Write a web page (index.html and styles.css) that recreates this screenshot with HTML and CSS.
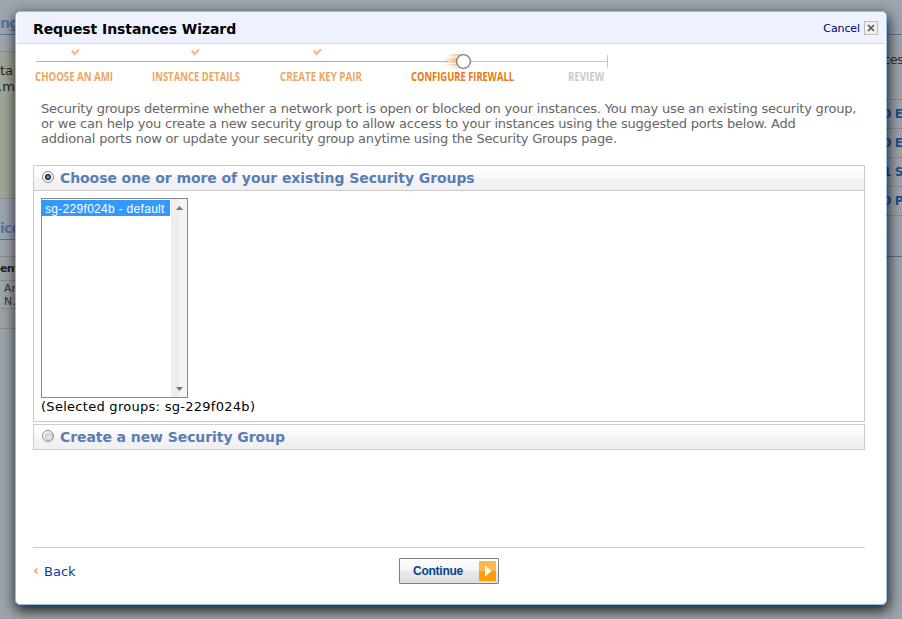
FILE: index.html
```html
<!DOCTYPE html>
<html lang="en">
<head>
<meta charset="utf-8">
<title>Request Instances Wizard</title>
<link rel="stylesheet" href="styles.css">
</head>
<body>
<div class="page">
  <div class="page-left">
    <div class="bg-head">ng</div>
    <div class="bg-gap"></div>
    <div class="bg-note">ta<br><span class="bg-ma">.ma</span></div>
    <div class="bg-head bg-head-low">ice</div>
    <div class="bg-gap"></div>
    <div class="bg-th">ent</div>
    <div class="bg-row">Am<br>N.</div>
    <div class="bg-foot"></div>
  </div>
  <div class="page-right">
    <div class="bg-head"></div>
    <div class="bg-intro">ces</div>
    <div class="bg-link">0 E</div>
    <div class="bg-link">0 E</div>
    <div class="bg-link">1 S</div>
    <div class="bg-link">0 P</div>
    <div class="bg-head bg-head-right"></div>
  </div>
</div>
<div class="modal">
  <div class="titlebar">
    <div class="title">Request Instances Wizard</div>
    <div class="cancel">Cancel</div>
    <svg class="close" width="14" height="14" viewBox="0 0 14 14"><rect x=".5" y=".5" width="13" height="13" fill="#f1f1f1" stroke="#bbb"/><path d="M4 4l6 6M10 4l-6 6" stroke="#555" stroke-width="1.7"/></svg>
  </div>
  <svg class="steps" width="580" height="44" viewBox="0 0 580 44">
    <defs><linearGradient id="trail"><stop offset="0" stop-color="#f3a45c" stop-opacity="0"/><stop offset="1" stop-color="#f3a45c" stop-opacity=".75"/></linearGradient></defs>
    <rect x="3" y="17" width="412" height="1" fill="#e9a36a"/>
    <path d="M437 17.500H574M574.500 11V24" stroke="#c8c8c8"/>
    <g fill="url(#trail)"><rect x="413" y="10" width="15" height="2"/><rect x="415" y="12" width="12" height="2" opacity=".6"/><rect x="410" y="14" width="15" height="2"/><rect x="408" y="16" width="16" height="3"/><rect x="411" y="20" width="15" height="2"/><rect x="414" y="23" width="14" height="1"/></g>
    <circle cx="430.500" cy="17.500" r="6.900" fill="#fff" stroke="#808080" stroke-width="1.400"/>
    <g fill="none" stroke="#f4b98a" stroke-width="2.200"><path d="M38.800 6.500l2.700 3.500 4.500-4.500"/><path d="M158.800 6.500l2.700 3.500 4.500-4.500"/><path d="M280.800 6.500l2.700 3.500 4.500-4.500"/></g>
    <g class="labels">
      <text x="2" y="37" textLength="78" lengthAdjust="spacingAndGlyphs">CHOOSE AN AMI</text>
      <text x="119" y="37" textLength="88" lengthAdjust="spacingAndGlyphs">INSTANCE DETAILS</text>
      <text x="247" y="37" textLength="82" lengthAdjust="spacingAndGlyphs">CREATE KEY PAIR</text>
      <text class="now" x="378" y="37" textLength="103" lengthAdjust="spacingAndGlyphs">CONFIGURE FIREWALL</text>
      <text class="next" x="535" y="37" textLength="36" lengthAdjust="spacingAndGlyphs">REVIEW</text>
    </g>
  </svg>
  <div class="intro">Security groups determine whether a network port is open or blocked on your instances. You may use an existing security group,<br>or we can help you create a new security group to allow access to your instances using the suggested ports below. Add<br>addional ports now or update your security group anytime using the Security Groups page.</div>
  <div class="panel">
    <div class="panel-head"><span class="radio radio-on"></span><span>Choose one or more of your existing Security Groups</span></div>
    <div class="panel-body">
      <div class="list">
        <div class="options"><div class="option"><span>sg-229f024b - default</span></div></div>
        <div class="scroll">
          <svg width="7" height="4" viewBox="0 0 7 4"><path d="M0 4L3.500 0 7 4z" fill="#777"/></svg>
          <svg width="7" height="4" viewBox="0 0 7 4"><path d="M0 0L3.500 4 7 0z" fill="#777"/></svg>
        </div>
      </div>
      <div class="selected">(Selected groups: sg-229f024b)</div>
    </div>
  </div>
  <div class="panel panel-two">
    <div class="panel-head"><span class="radio"></span><span>Create a new Security Group</span></div>
  </div>
  <div class="footer">
    <div class="back"><svg width="4" height="6" viewBox="0 0 4 6"><path d="M3.500 .5L1 3l2.500 2.500" fill="none" stroke="#f39a1e" stroke-width="1.300"/></svg><span>Back</span></div>
    <div class="continue"><span>Continue</span><svg width="17" height="20" viewBox="0 0 17 20"><rect width="17" height="10" fill="#ffb84a"/><rect y="10" width="17" height="10" fill="#ff9c06"/><path d="M6 4.500L12.500 10 6 15.500z" fill="#fff"/></svg></div>
  </div>
</div>
</body>
</html>
```
FILE: styles.css
```css
* { box-sizing: border-box; }
body {
  margin: 0;
  width: 902px;
  height: 619px;
  overflow: hidden;
  background: #9ba5ab;
  font-family: "DejaVu Sans", Verdana, sans-serif;
  font-size: 13px;
}
.page {
  height: 619px;
  padding-top: 10px;
  display: flex;
  justify-content: space-between;
}
.page-left, .page-right { width: 17px; overflow: hidden; white-space: nowrap; }
.bg-head {
  height: 25px;
  border-bottom: 1px solid #55789f;
  background: #9da4b2;
  color: #54779f;
  font-weight: bold;
  font-size: 14px;
  line-height: 26px;
  letter-spacing: -.8px;
}
.bg-gap { height: 16px; background: #a0a6ad; }
.bg-note {
  height: 148px;
  border: solid #8b908d;
  border-width: 1px 0;
  background: #a0a698;
  color: #222;
  line-height: 16px;
  padding-top: 11px;
}
.bg-ma { margin-left: -2px; }
.bg-head-low { height: 41px; line-height: 58px; }
.bg-th {
  height: 25px;
  border: solid #888d92;
  border-width: 1px 0;
  font-size: 11px;
  font-weight: bold;
  line-height: 24px;
  letter-spacing: -.6px;
  color: #222;
}
.bg-row {
  height: 28px;
  border-bottom: 1px solid #888d92;
  font-size: 11px;
  line-height: 13px;
  padding: 1px 0 0 4px;
  color: #333;
}
.bg-foot { height: 20px; border-bottom: 1px solid #888d92; background: #9da1a5; }
.page-right { width: 19px; background: linear-gradient(#a0a4ab, #a0a4ab) 0 0 / 100% 247px no-repeat; }
.bg-intro { height: 65px; padding-top: 17px; color: #333; border-bottom: 1px dotted #74787f; letter-spacing: -.4px; }
.bg-link {
  height: 29px;
  line-height: 28px;
  border-bottom: 1px dotted #74787f;
  color: #1f4f85;
  font-weight: bold;
  font-size: 12px;
  letter-spacing: -.4px;
}
.bg-head-right { margin-top: 16px; }
.modal {
  position: absolute;
  left: 15px;
  top: 11px;
  width: 872px;
  height: 594px;
  border: 1px solid #8fbfe6;
  border-radius: 5px;
  background: #fff;
  box-shadow: 1px 5px 13px 1px rgba(0, 0, 0, .8);
  padding: 0 21px 0 17px;
  display: flex;
  flex-direction: column;
}
.titlebar {
  flex: none;
  height: 32px;
  margin: 0 -20px 0 -16px;
  padding: 0 7px 0 16px;
  background: #edf2fe;
  border-bottom: 1px solid #cbdff2;
  border-radius: 4px 4px 0 0;
  display: flex;
  align-items: center;
}
.title { font-size: 14px; font-weight: bold; letter-spacing: -.08px; margin-top: 2px; flex: 1; }
.cancel { font-size: 11px; letter-spacing: -.1px; color: #00006a; margin: 1px 4px 0 0; }
.steps { flex: none; display: block; }
.labels { font: bold 11.5px "Open Sans", sans-serif; fill: #e9a865; }
.labels .now { fill: #e57a12; }
.labels .next { fill: #c9c9c9; }
.intro {
  flex: none;
  height: 77px;
  padding: 13px 0 0 8px;
  line-height: 15px;
  letter-spacing: -.205px;
  color: #666;
  white-space: nowrap;
}
.panel { flex: none; border: 1px solid #ccc; height: 257px; }
.panel-two { height: 26px; margin-top: 2px; }
.panel-head {
  height: 25px;
  display: flex;
  align-items: center;
  gap: 6px;
  padding-left: 8px;
  border-bottom: 1px solid #ccc;
  background: linear-gradient(#fff, #fcf8fb 50%, #f6f3f6 50%, #f1eef1);
  color: #577fb5;
  font-size: 14px;
  font-weight: bold;
  letter-spacing: -.08px;
  white-space: nowrap;
}
.panel-two .panel-head { height: 24px; border: 0; }
.radio {
  width: 12px;
  height: 12px;
  margin-top: -2px;
  border: 1px solid #8e8f8f;
  border-radius: 50%;
  background: radial-gradient(circle at 60% 60%, #eee, #c9ccd0 45%, #f4f4f4 55%);
}
.radio-on { background: radial-gradient(circle, #7fd3f5 0, #18476d 28%, #12293e 38%, #f4f4f4 48%); }
.panel-body { padding: 7px; }
.list {
  width: 147px;
  height: 200px;
  border: 1px solid #828790;
  display: flex;
  font: 12px "Liberation Sans", Arial, sans-serif;
}
.options { flex: 1; padding: 1px 1px 0 0; }
.option { height: 16px; line-height: 18px; padding-left: 3px; letter-spacing: .3px; color: #fff; background: #3399ff; white-space: nowrap; }
.scroll {
  width: 16px;
  background: linear-gradient(90deg, #ededed 0 50%, #f6f2f5 50%);
  display: flex;
  flex-direction: column;
  justify-content: space-between;
  align-items: center;
  padding: 7px 0 6px;
}
.selected { line-height: 17px; letter-spacing: .28px; white-space: nowrap; }
.footer {
  flex: none;
  margin-top: 97px;
  border-top: 1px solid #ccc;
  display: grid;
  grid-template-columns: 366px 100px;
  align-items: center;
  padding-top: 10px;
}
.back { display: flex; align-items: center; gap: 6px; padding-left: 1px; color: #00449a; }
.continue {
  height: 26px;
  border: 1px solid #808080;
  border-radius: 1px;
  background: linear-gradient(#fff, #f5f3f5 48%, #eae8ea 52%, #dfdddf);
  display: flex;
  align-items: center;
  justify-content: space-between;
  padding: 0 2px 0 13px;
  color: #004390;
  font: bold 12px "Liberation Sans", Arial, sans-serif;
  letter-spacing: -.25px;
}
```
